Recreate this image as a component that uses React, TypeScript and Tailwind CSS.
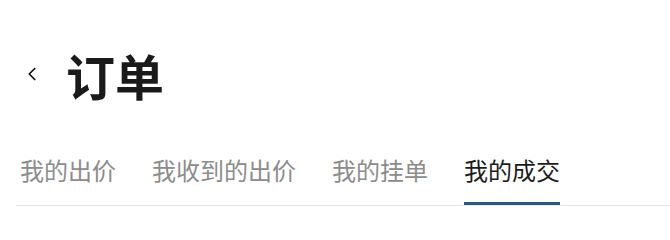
import { ChevronLeft } from "lucide-react";

const tabs = ["我的出价", "我收到的出价", "我的挂单", "我的成交"];

export default function App() {
  const active = 3;
  return (
    <div className="w-[670px] h-[240px] bg-white overflow-hidden font-['Noto_Sans_CJK_SC','Noto_Sans',sans-serif]">
      <div className="flex items-center h-[76px] mt-[36px] pl-[21px]">
        <ChevronLeft className="w-[22px] h-[22px] text-[#111]" strokeWidth={1.9} />
        <h1 className="ml-[23px] text-[49px] font-bold leading-none text-[#1a1a1a]">订单</h1>
      </div>
      <div className="ml-[16px] mt-[40px] flex gap-[36px] pl-[4px] border-b border-[#e6e6e6]">
        {tabs.map((t, i) => (
          <div
            key={t}
            className={`relative pb-[17px] text-[24px] leading-[36px] ${
              i === active ? "text-[#1c1c1c]" : "text-[#8c8c8c]"
            }`}
          >
            {t}
            {i === active && (
              <div className="absolute left-0 right-0 bottom-0 h-[3px] bg-[#2b5783]" />
            )}
          </div>
        ))}
      </div>
    </div>
  );
}
